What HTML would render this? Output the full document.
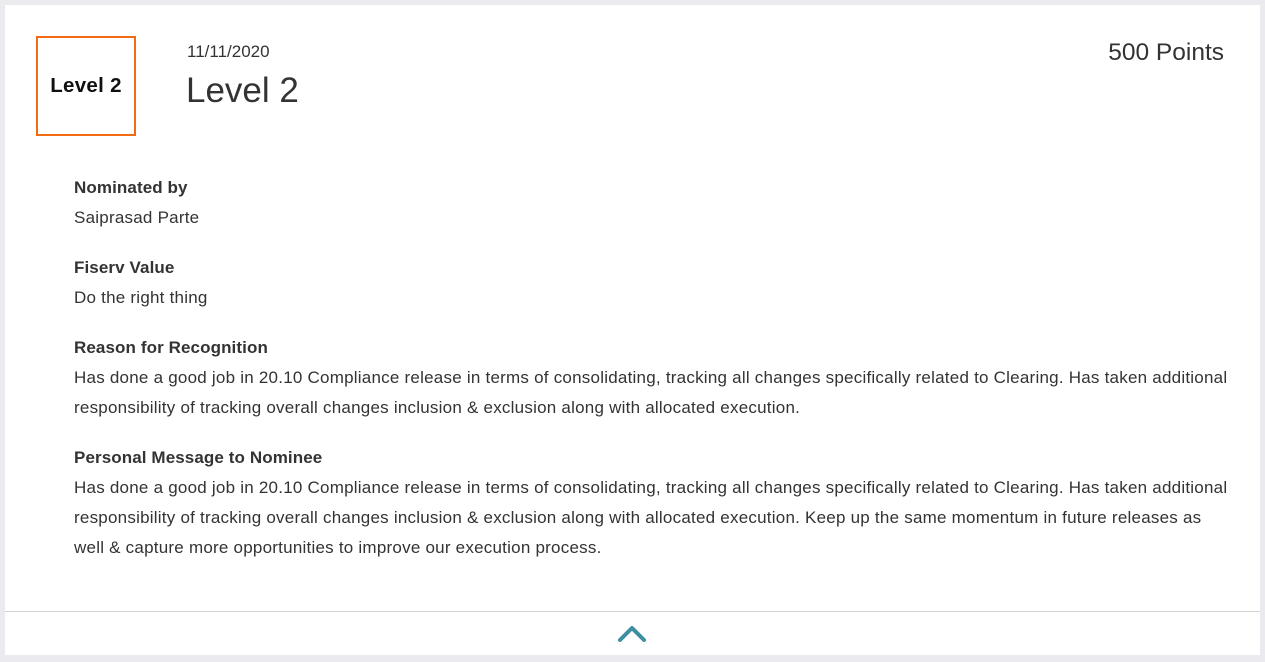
<!DOCTYPE html><html><head><style>
body{margin:0;background:#ebebef;width:1265px;height:662px;overflow:hidden;font-family:"Liberation Sans",sans-serif;color:#333}
.card{position:absolute;left:5px;top:5px;width:1255px;height:650px;background:#fff}
.box{position:absolute;left:31px;top:31px;width:96px;height:96px;border:2px solid #f26b12;display:flex;align-items:center;justify-content:center;font-weight:bold;font-size:20.5px;color:#111;letter-spacing:0.3px}
.t{position:absolute}
.lab{font-weight:bold;font-size:17px;color:#333;letter-spacing:0.1px}
.txt{font-size:17px;line-height:30px;letter-spacing:0.23px}
.hr{position:absolute;left:0;right:0;top:606px;border-top:1px solid #d4d4d4}
</style></head><body><div class="card">
<div class="box">Level 2</div>
<div class="t" style="left:182px;top:37px;font-size:17px">11/11/2020</div>
<div class="t" style="left:181px;top:66px;font-size:35px">Level 2</div>
<div class="t" style="right:36px;top:34px;font-size:24.5px">500 Points</div>
<div class="t" style="left:69px;top:168px;width:1160px">
<div class="lab" style="line-height:30px">Nominated by</div><div class="txt">Saiprasad Parte</div>
<div class="lab" style="line-height:30px;margin-top:20px">Fiserv Value</div><div class="txt">Do the right thing</div>
<div class="lab" style="line-height:30px;margin-top:20px">Reason for Recognition</div><div class="txt">Has done a good job in 20.10 Compliance release in terms of consolidating, tracking all changes specifically related to Clearing. Has taken additional responsibility of tracking overall changes inclusion &amp; exclusion along with allocated execution.</div>
<div class="lab" style="line-height:30px;margin-top:20px">Personal Message to Nominee</div><div class="txt">Has done a good job in 20.10 Compliance release in terms of consolidating, tracking all changes specifically related to Clearing. Has taken additional responsibility of tracking overall changes inclusion &amp; exclusion along with allocated execution. Keep up the same momentum in future releases as well &amp; capture more opportunities to improve our execution process.</div>
</div>
<div class="hr"></div>
<svg style="position:absolute;left:612px;top:617px" width="32" height="22"><path d="M3 18 L15 6 L27 18" fill="none" stroke="#3e8fa0" stroke-width="4" stroke-linecap="round" stroke-linejoin="round"/></svg>
</div></body></html>
